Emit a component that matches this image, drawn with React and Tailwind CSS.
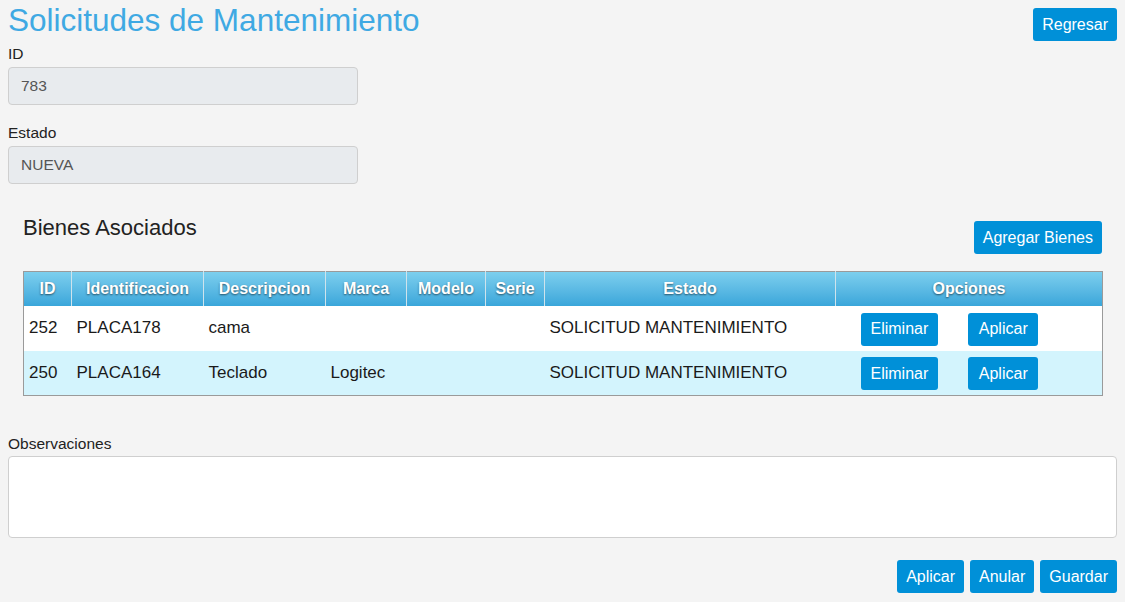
import React from "react";

const rows = [
  { id: "252", ident: "PLACA178", desc: "cama", marca: "", modelo: "", serie: "", estado: "SOLICITUD MANTENIMIENTO" },
  { id: "250", ident: "PLACA164", desc: "Teclado", marca: "Logitec", modelo: "", serie: "", estado: "SOLICITUD MANTENIMIENTO" },
];

const cols = [
  { label: "ID", w: "w-[48px]" },
  { label: "Identificacion", w: "w-[132px]" },
  { label: "Descripcion", w: "w-[122px]" },
  { label: "Marca", w: "w-[81px]" },
  { label: "Modelo", w: "w-[79px]" },
  { label: "Serie", w: "w-[59px]" },
  { label: "Estado", w: "w-[291px]" },
  { label: "Opciones", w: "w-[267px]" },
];

const Btn = ({ children, className = "" }) => (
  <button
    className={`h-[33px] px-[9px] rounded-[3px] bg-[#0090d8] text-white text-[16px] leading-[20px] whitespace-nowrap ${className}`}
  >
    {children}
  </button>
);

const Field = ({ label, value, className = "" }) => (
  <div className={className}>
    <label className="block text-[15.5px] leading-[22px] text-[#222]">{label}</label>
    <div className="mt-[2px] w-[350px] h-[38px] flex items-center px-[12px] bg-[#e8ebee] border border-[#cfcfcf] rounded-[4px] text-[15.5px] text-[#555]">
      {value}
    </div>
  </div>
);

export default function App() {
  return (
    <div className="min-h-screen bg-[#f4f4f4] px-[8px] pt-[2px] pb-[9px] font-['Liberation_Sans',Arial,sans-serif]">
      {/* HEADER */}
      <div className="flex justify-between items-start">
        <h1 className="text-[31.5px] leading-[36px] text-[#3fa9e3]">Solicitudes de Mantenimiento</h1>
        <Btn className="mt-[6px]">Regresar</Btn>
      </div>

      <Field label="ID" value="783" className="mt-[2px]" />
      <Field label="Estado" value="NUEVA" className="mt-[17px]" />

      {/* BIENES */}
      <div className="px-[15px] mt-[30px]">
        <div className="flex justify-between items-start">
          <h2 className="text-[22px] leading-[28px] text-[#222]">Bienes Asociados</h2>
          <Btn className="mt-[7px]">Agregar Bienes</Btn>
        </div>

        <table className="mt-[17px] w-full table-fixed border-collapse border border-[#9a9a9a]">
          <thead>
            <tr className="h-[34px] bg-linear-to-b from-[#7ccfee] to-[#39a6da]">
              {cols.map((c, i) => (
                <th
                  key={c.label}
                  className={`${c.w} ${i > 0 ? "border-l border-[#cfe3ec]" : ""} text-center text-white font-bold text-[16px] [text-shadow:0_1px_2px_rgba(0,0,0,0.55)]`}
                >
                  {c.label}
                </th>
              ))}
            </tr>
          </thead>
          <tbody>
            {rows.map((r, i) => (
              <tr key={r.id} className={`h-[45px] text-[17px] text-[#1a1a1a] ${i % 2 ? "bg-[#d3f4fd]" : "bg-white"}`}>
                <td className="pl-[5px]">{r.id}</td>
                <td className="pl-[5px]">{r.ident}</td>
                <td className="pl-[5px]">{r.desc}</td>
                <td className="pl-[5px]">{r.marca}</td>
                <td className="pl-[5px]">{r.modelo}</td>
                <td className="pl-[5px]">{r.serie}</td>
                <td className="pl-[5px] whitespace-nowrap">{r.estado}</td>
                <td className="pl-[25px]">
                  <div className="flex gap-[30px] pt-[2px]">
                    <Btn className="px-[10px]">Eliminar</Btn>
                    <Btn className="px-[10.5px]">Aplicar</Btn>
                  </div>
                </td>
              </tr>
            ))}
          </tbody>
        </table>
      </div>

      {/* OBSERVACIONES */}
      <div className="mt-[37px]">
        <label className="block text-[15.5px] leading-[22px] text-[#222]">Observaciones</label>
        <textarea className="mt-[1px] block w-full h-[82px] bg-white border border-[#cfcfcf] rounded-[4px] resize-none outline-none" />
      </div>

      <div className="mt-[22px] flex justify-end gap-[6px]">
        <Btn className="px-[9.5px]">Aplicar</Btn>
        <Btn>Anular</Btn>
        <Btn>Guardar</Btn>
      </div>
    </div>
  );
}
